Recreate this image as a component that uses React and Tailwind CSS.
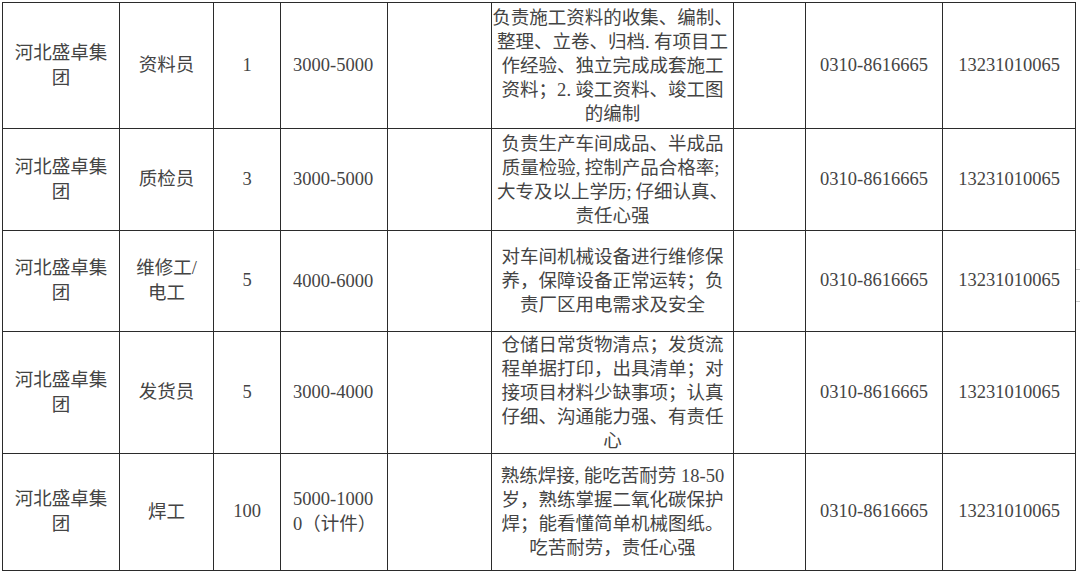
const rows = [
  {
    name: "资料员",
    num: "1",
    pay: ["3000-5000"],
    desc: ["负责施工资料的收集、编制、", "整理、立卷、归档.有项目工", "作经验、独立完成成套施工", "资料；2.竣工资料、竣工图", "的编制"],
  },
  {
    name: "质检员",
    num: "3",
    pay: ["3000-5000"],
    desc: ["负责生产车间成品、半成品", "质量检验,控制产品合格率;", "大专及以上学历;仔细认真、", "责任心强"],
  },
  {
    name: ["维修工/", "电工"],
    num: "5",
    pay: ["4000-6000"],
    desc: ["对车间机械设备进行维修保", "养，保障设备正常运转；负", "责厂区用电需求及安全"],
  },
  {
    name: "发货员",
    num: "5",
    pay: ["3000-4000"],
    desc: ["仓储日常货物清点；发货流", "程单据打印，出具清单；对", "接项目材料少缺事项；认真", "仔细、沟通能力强、有责任", "心"],
  },
  {
    name: "焊工",
    num: "100",
    pay: ["5000-1000", "0（计件）"],
    desc: ["熟练焊接,能吃苦耐劳 18-50", "岁，熟练掌握二氧化碳保护", "焊；能看懂简单机械图纸。", "吃苦耐劳，责任心强"],
  },
];

// half-width punctuation takes half a cell, like in the original doc
function Line({ text }) {
  const parts = text.split(/([,;.])/);
  return (
    <div>
      {parts.map((p, i) =>
        /^[,;.]$/.test(p) ? (
          <span key={i} className="inline-block w-[9px] text-left">
            {p}
          </span>
        ) : (
          <span key={i}>{p}</span>
        )
      )}
    </div>
  );
}

function Cell({ children, className = "" }) {
  return (
    <div className={"bg-white flex flex-col justify-center text-center " + className}>
      {children}
    </div>
  );
}

export default function App() {
  return (
    <div
      className="w-[1080px] h-[575px] bg-white pl-[2px] pt-[2px] text-[18.5px] text-[#444] overflow-hidden flex items-start"
      style={{ fontFamily: '"Liberation Serif", "Noto Sans CJK SC", serif' }}
    >
      <div className="inline-grid grid-cols-[116px_93px_66px_106px_103px_241px_71px_136px_132px] grid-rows-[125px_101px_100px_121px_116px] gap-px p-px bg-[#2b2b2b]">
        {rows.map((r, i) => (
          <div key={i} className="contents">
            <Cell className="leading-[25px] items-center">
              <div className="w-[93px] break-all">河北盛卓集团</div>
            </Cell>
            <Cell className="leading-[25px]">
              {Array.isArray(r.name) ? r.name.map((n) => <div key={n}>{n}</div>) : <div>{r.name}</div>}
            </Cell>
            <Cell>{r.num}</Cell>
            <Cell className="text-left pl-[12px] leading-[25px]">
              {r.pay.map((p) => (
                <div key={p}>{p}</div>
              ))}
            </Cell>
            <Cell />
            <Cell className="leading-[24px] whitespace-nowrap">
              {r.desc.map((d) => (
                <Line key={d} text={d} />
              ))}
            </Cell>
            <Cell />
            <Cell>0310-8616665</Cell>
            <Cell>13231010065</Cell>
          </div>
        ))}
      </div>
      <div className="w-[4px] flex flex-col">
        <div className="h-[267px]" />
        <div className="h-[33px] border-y border-[#c8c8c8]" />
      </div>
    </div>
  );
}
